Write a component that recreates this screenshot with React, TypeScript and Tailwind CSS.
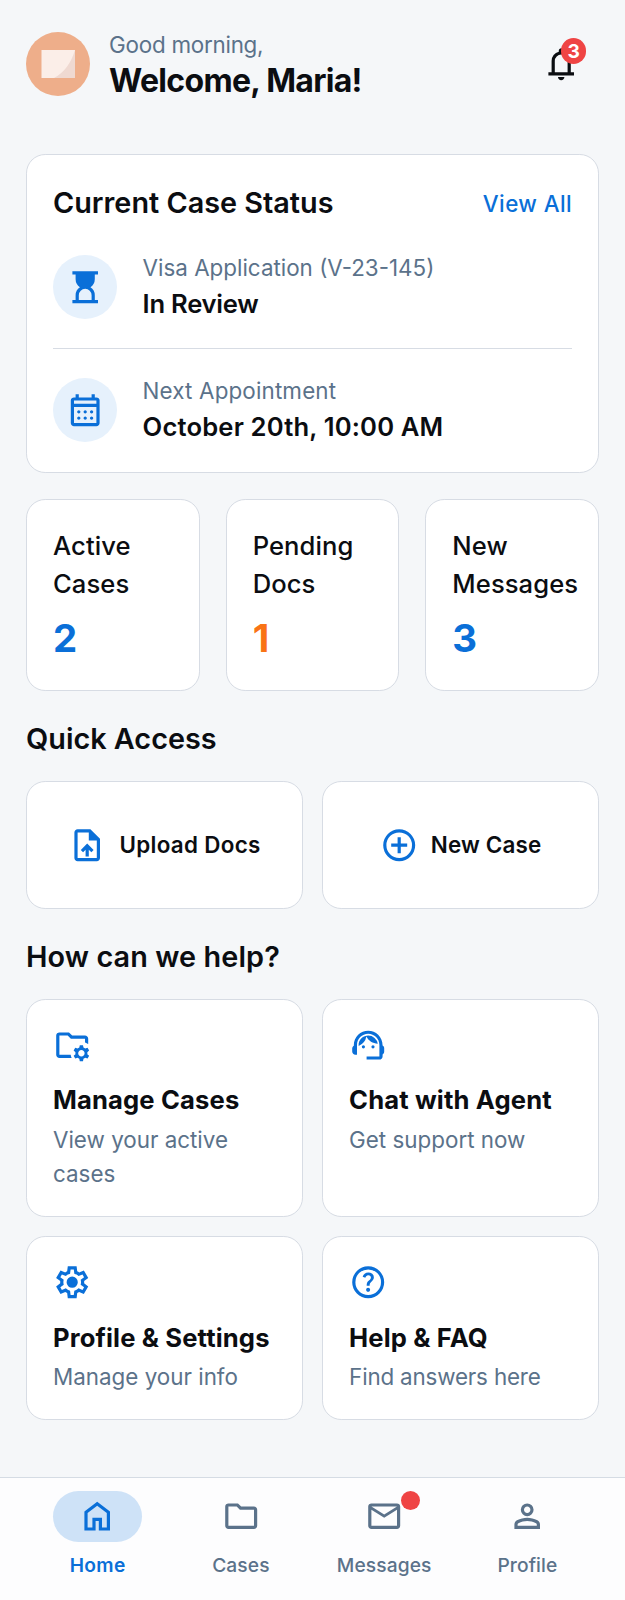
import React from "react";

const P = {
  bell: "M4 19v-2h2v-7q0-2.075 1.25-3.687T10.5 4.2v-.7q0-.625.438-1.062T12 2t1.063.438T13.5 3.5v.7q2 .5 3.25 2.113T18 10v7h2v2zm8 3q-.825 0-1.412-.587T10 20h4q0 .825-.587 1.413T12 22m-4-5h8v-7q0-1.65-1.175-2.825T12 6T9.175 7.175T8 10z",
  hourglass: "M8 20h8v-3q0-1.65-1.175-2.825T12 13t-2.825 1.175T8 17zm-4 2v-2h2v-3q0-1.525.713-2.863T8.7 12q-1.275-.8-1.987-2.137T6 7V4H4V2h16v2h-2v3q0 1.525-.712 2.863T15.3 12q1.275.8 1.988 2.138T18 17v3h2v2z",
  calendar: "M5 22q-.825 0-1.412-.587T3 20V6q0-.825.588-1.412T5 4h1V2h2v2h8V2h2v2h1q.825 0 1.413.588T21 6v14q0 .825-.587 1.413T19 22zm0-2h14V10H5zM5 8h14V6H5zm7 6q-.425 0-.712-.288T11 13t.288-.712T12 12t.713.288T13 13t-.288.713T12 14m-4 0q-.425 0-.712-.288T7 13t.288-.712T8 12t.713.288T9 13t-.288.713T8 14m8 0q-.425 0-.712-.288T15 13t.288-.712T16 12t.713.288T17 13t-.288.713T16 14m-4 4q-.425 0-.712-.288T11 17t.288-.712T12 16t.713.288T13 17t-.288.713T12 18m-4 0q-.425 0-.712-.288T7 17t.288-.712T8 16t.713.288T9 17t-.288.713T8 18m8 0q-.425 0-.712-.288T15 17t.288-.712T16 16t.713.288T17 17t-.288.713T16 18",
  upload: "M11 19h2v-4.175l1.6 1.6L16 15l-4-4l-4 4l1.425 1.4L11 14.825zm-5 3q-.825 0-1.412-.587T4 20V4q0-.825.588-1.412T6 2h8l6 6v12q0 .825-.587 1.413T18 22zm7-13V4H6v16h12V9z",
  add: "M11 17h2v-4h4v-2h-4V7h-2v4H7v2h4zm1 5q-2.075 0-3.9-.788t-3.175-2.137T2.788 15.9T2 12t.788-3.9t2.137-3.175T8.1 2.788T12 2t3.9.788t3.175 2.137T21.213 8.1T22 12t-.788 3.9t-2.137 3.175t-3.175 2.138T12 22m0-2q3.35 0 5.675-2.325T20 12t-2.325-5.675T12 4T6.325 6.325T4 12t2.325 5.675T12 20",
  folderGear: "M4 18V6v4.3v-.3zm0 2q-.825 0-1.412-.587T2 18V6q0-.825.588-1.412T4 4h6l2 2h8q.825 0 1.413.588T22 8v3.275q-.45-.325-.95-.563T20 10.3V8h-8.825l-2-2H4v12h7.075q.075.525.225 1.025t.375.975zm12.75 2l-.3-1.5q-.3-.125-.563-.262t-.537-.338l-1.45.45l-1-1.7l1.15-1q-.05-.35-.05-.65t.05-.65l-1.15-1l1-1.7l1.45.45q.275-.2.538-.337t.562-.263l.3-1.5h2l.3 1.5q.3.125.563.263t.537.337l1.45-.45l1 1.7l-1.15 1q.05.35.05.65t-.05.65l1.15 1l-1 1.7l-1.45-.45q-.275.2-.537.338t-.563.262l-.3 1.5zm1-3q.825 0 1.413-.587T19.750 17t-.587-1.412T17.750 15t-1.412.588T15.750 17t.588 1.413T17.750 19",
  agent: "M21 12.22C21 6.73 16.74 3 12 3c-4.69 0-9 3.65-9 9.280c-.6.340-1 .980-1 1.720v2c0 1.100.900 2 2 2h1v-6.100c0-3.870 3.130-7 7-7s7 3.130 7 7V19h-8v2h8c1.100 0 2-.900 2-2v-1.220c.590-.310 1-.920 1-1.640v-2.300c0-.700-.410-1.310-1-1.620zM9 12a1 1 0 1 0 0 2a1 1 0 0 0 0-2m6 0a1 1 0 1 0 0 2a1 1 0 0 0 0-2m3-.970A6.040 6.040 0 0 0 12.050 6c-3.030 0-6.290 2.510-6.030 6.450a8.075 8.075 0 0 0 4.860-5.890c1.310 2.630 4 4.440 7.120 4.470",
  help: "M11.95 18q.525 0 .888-.363t.362-.887t-.362-.888t-.888-.362t-.887.363t-.363.887t.363.888t.887.362m-.9-3.850h1.850q0-.825.188-1.300t1.062-1.300q.650-.650 1.025-1.238T15.550 8.900q0-1.400-1.025-2.150T12.100 6q-1.425 0-2.312.750T8.550 8.550l1.650.650q.125-.450.563-.975T12.100 7.700q.800 0 1.200.438t.400.962q0 .500-.300.938t-.750.812q-1.100.975-1.350 1.475t-.250 1.825M12 22q-2.075 0-3.900-.788t-3.175-2.137T2.788 15.900T2 12t.788-3.900t2.137-3.175T8.100 2.788T12 2t3.900.788t3.175 2.137T21.213 8.100T22 12t-.788 3.900t-2.137 3.175t-3.175 2.138T12 22m0-2q3.350 0 5.675-2.325T20 12t-2.325-5.675T12 4T6.325 6.325T4 12t2.325 5.675T12 20",
  home: "M6 19h3v-6h6v6h3v-9l-6-4.500L6 10zm-2 2V9l8-6l8 6v12h-7v-6h-2v6z",
  folder: "M4 20q-.825 0-1.412-.587T2 18V6q0-.825.588-1.412T4 4h6l2 2h8q.825 0 1.413.588T22 8v10q0 .825-.587 1.413T20 20zm0-2h16V8h-8.825l-2-2H4z",
  mail: "M4 20q-.825 0-1.412-.587T2 18V6q0-.825.588-1.412T4 4h16q.825 0 1.413.588T22 6v12q0 .825-.587 1.413T20 20zm8-7L4 8v10h16V8zm0-2l8-5H4zM4 8V6v12z",
  person: "M12 12q-1.650 0-2.825-1.175T8 8t1.175-2.825T12 4t2.825 1.175T16 8t-1.175 2.825T12 12m-8 8v-2.800q0-.850.438-1.562T5.600 14.550q1.550-.775 3.150-1.162T12 13t3.250.388t3.150 1.162q.725.375 1.163 1.088T20 17.200V20zm2-2h12v-.800q0-.275-.137-.500t-.363-.350q-1.350-.675-2.725-1.012T12 15t-2.775.338T6.500 16.350q-.225.125-.363.350T6 17.200zm6-8q.825 0 1.413-.587T14 8t-.587-1.412T12 6t-1.412.588T10 8t.588 1.413T12 10",
  gear: "m9.250 22l-.400-3.200q-.325-.125-.612-.300t-.563-.375L4.700 19.375l-2.750-4.750l2.575-1.950Q4.500 12.500 4.500 12.338v-.675q0-.163.025-.338L1.950 9.375l2.750-4.750l2.975 1.250q.275-.200.575-.375t.600-.300l.400-3.200h5.500l.400 3.200q.325.125.613.300t.562.375l2.975-1.250l2.750 4.750l-2.575 1.950q.025.175.025.338v.674q0 .163-.050.338l2.575 1.950l-2.750 4.750l-2.950-1.250q-.275.200-.575.375t-.600.300l-.400 3.200zM11 20h1.975l.350-2.650q.775-.200 1.438-.587t1.212-.938l2.475 1.025l.975-1.700l-2.150-1.625q.125-.350.175-.737T17.500 12t-.050-.787t-.175-.738l2.150-1.625l-.975-1.700l-2.475 1.050q-.550-.575-1.212-.962t-1.438-.588L13 4h-1.975l-.350 2.650q-.775.200-1.437.588t-1.213.937L5.550 7.150l-.975 1.700l2.150 1.600q-.125.375-.175.750t-.050.800q0 .400.050.775t.175.750l-2.150 1.625l.975 1.700l2.475-1.050q.550.575 1.213.963t1.437.587zM12 8.500a3.500 3.500 0 1 0 0 7a3.500 3.500 0 0 0 0-7",
};

function Icon({ d, className = "" }: { d: string; className?: string }) {
  return (
    <svg viewBox="0 0 24 24" fill="currentColor" className={`size-[38.4px] shrink-0 ${className}`}>
      <path d={d} />
    </svg>
  );
}

const card = "rounded-[19.2px] border border-[#d7dce4] bg-white";
const body = "text-[22.4px] leading-[33.6px]";

function CaseRow({ icon, label, value, tight }: { icon: string; label: string; value: string; tight?: boolean }) {
  return (
    <div className="flex items-center gap-[25.6px]">
      <div className="flex size-16 items-center justify-center rounded-full bg-[#e6f1fc] text-[#0a6fd8]">
        <Icon d={icon} />
      </div>
      <div>
        <p className={`${body} text-[#5b728a] ${tight ? "" : "tracking-[0.15px]"}`}>{label}</p>
        <p
          className={`text-[25.6px] leading-[38.4px] font-semibold ${tight ? "tracking-[-0.25px]" : "tracking-[0.17px]"}`}
        >
          {value}
        </p>
      </div>
    </div>
  );
}

function Stat({ a, b, value, color }: { a: string; b: string; value: string; color: string }) {
  return (
    <div className={`${card} h-48 min-w-0 px-[26px] pt-[27px]`}>
      <p className="text-[25.6px] leading-[38.4px] font-medium tracking-[0.08px]">
        {a}
        <br />
        {b}
      </p>
      <p className={`mt-[10.5px] text-[38.4px] leading-[48px] font-bold ${color}`}>{value}</p>
    </div>
  );
}

function Help({ icon, title, text, textClass = "" }: { icon: string; title: string; text: string; textClass?: string }) {
  return (
    <div className={`${card} p-[26px]`}>
      <Icon d={icon} className="text-[#0a6fd8]" />
      <h3 className="mt-[17px] text-[25.6px] leading-[38.4px] font-bold tracking-[0.14px]">{title}</h3>
      <p className={`${body} mt-[3.5px] text-[#5b728a] ${textClass}`}>{text}</p>
    </div>
  );
}

function NavItem({ icon, label, active, dot }: { icon: string; label: string; active?: boolean; dot?: boolean }) {
  return (
    <div className={`flex flex-1 flex-col items-center ${active ? "text-[#0a6fd8]" : "text-[#5b728a]"}`}>
      <div
        className={`relative flex h-[51.2px] w-[89.6px] items-center justify-center rounded-full ${active ? "bg-[#cee2f7]" : ""}`}
      >
        <Icon d={icon} />
        {dot && <span className="absolute top-0 right-[9px] size-[19.2px] rounded-full bg-[#ef4444]" />}
      </div>
      <span
        className={`mt-[9px] text-[19.2px] leading-[28.8px] ${active ? "font-semibold tracking-[0.3px]" : "font-medium tracking-[0.1px]"}`}
      >
        {label}
      </span>
    </div>
  );
}

export default function App() {
  return (
    <div className="flex h-[1600px] w-full flex-col overflow-hidden bg-[#f5f7f9] font-['Inter',sans-serif] text-[#0b0d11]">
      <header className="flex h-32 items-center px-[25.6px]">
        <svg viewBox="0 0 64 64" className="size-16 shrink-0">
          <circle cx="32" cy="32" r="32" fill="#eeae8a" />
          <path d="M15.500 18H49V46H15.500Z" fill="#fbeee8" />
          <path d="M49 18V46H28Q43 38 49 18Z" fill="#efd9d1" />
        </svg>
        <div className="ml-[19.5px] flex-1">
          <p className="-mt-[1px] text-[22.4px] leading-[34.6px] tracking-[-0.25px] text-[#5b728a]">Good morning,</p>
          <h1 className="text-[32px] leading-[36px] font-bold tracking-[-0.7px]">Welcome, Maria!</h1>
        </div>
        <div className="relative mr-[19.4px]">
          <Icon d={P.bell} />
          <span className="absolute -top-[6.500px] -right-[6.400px] flex size-[25.6px] items-center justify-center rounded-full bg-[#ef4444] text-[19.2px] font-bold text-white">
            3
          </span>
        </div>
      </header>

      <main className="px-[26px] pt-[26px]">
        <section className={`${card} h-[318.500px] px-[26px] pt-[26px]`}>
          <div className="flex items-center justify-between">
            <h2 className="text-[28.8px] leading-[43.2px] font-semibold">Current Case Status</h2>
            <a className={`${body} pt-[2px] font-medium tracking-[0.4px] text-[#0a6fd8]`}>View All</a>
          </div>
          <div className="mt-[26.8px] border-b border-[#d7dce4] pb-[25px]">
            <CaseRow icon={P.hourglass} label="Visa Application (V-23-145)" value="In Review" tight />
          </div>
          <div className="mt-[25px]">
            <CaseRow icon={P.calendar} label="Next Appointment" value="October 20th, 10:00 AM" />
          </div>
        </section>

        <section className="mt-[26.500px] grid grid-cols-3 gap-[26px]">
          <Stat a="Active" b="Cases" value="2" color="text-[#0a6fd8]" />
          <Stat a="Pending" b="Docs" value="1" color="text-[#f97316]" />
          <Stat a="New" b="Messages" value="3" color="text-[#0a6fd8]" />
        </section>

        <h2 className="mt-[26px] text-[28.8px] leading-[43.2px] font-semibold">Quick Access</h2>
        <section className="mt-[21.2px] grid grid-cols-2 gap-[19.2px]">
          <div className={`${card} flex h-[127.400px] items-center justify-center gap-[12.8px]`}>
            <Icon d={P.upload} className="text-[#0a6fd8]" />
            <span className={`${body} font-semibold tracking-[0.3px]`}>Upload Docs</span>
          </div>
          <div className={`${card} flex h-[127.400px] items-center justify-center gap-[12.8px]`}>
            <Icon d={P.add} className="text-[#0a6fd8]" />
            <span className={`${body} font-semibold tracking-[0.2px]`}>New Case</span>
          </div>
        </section>

        <h2 className="mt-[26px] text-[28.8px] leading-[43.2px] font-semibold tracking-[0.1px]">How can we help?</h2>
        <section className="mt-[21px] grid grid-cols-2 grid-rows-[218px_184px] gap-[19.2px]">
          <Help icon={P.folderGear} title="Manage Cases" text="View your active cases" />
          <Help icon={P.agent} title="Chat with Agent" text="Get support now" />
          <Help icon={P.gear} title="Profile & Settings" text="Manage your info" />
          <Help icon={P.help} title="Help & FAQ" text="Find answers here" textClass="tracking-[-0.17px]" />
        </section>
      </main>

      <nav className="mt-auto flex h-[123px] border-t border-[#d5dce4] bg-[#fdfdfe] px-[26px] pt-[13px]">
        <NavItem icon={P.home} label="Home" active />
        <NavItem icon={P.folder} label="Cases" />
        <NavItem icon={P.mail} label="Messages" dot />
        <NavItem icon={P.person} label="Profile" />
      </nav>
    </div>
  );
}
